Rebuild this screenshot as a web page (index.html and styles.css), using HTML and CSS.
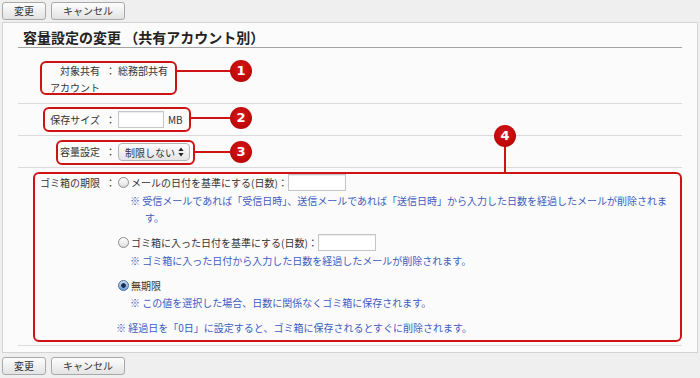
FILE: index.html
```html
<!DOCTYPE html>
<html lang="ja">
<head>
    <meta charset="UTF-8">
    <meta name="viewport" content="width=device-width, initial-scale=1.0">
    <title>容量設定の変更</title>
    <link rel="stylesheet" href="styles.css">
</head>
<body>
    <div class="toolbar">
        <button class="btn">変更</button>
        <button class="btn">キャンセル</button>
    </div>

    <div class="panel">
        <h2 class="panel-title">容量設定の変更 （共有アカウント別）</h2>
        <div class="form">
            <div class="row row-account">
                <div class="label">対象共有<br>アカウント</div>
                <div class="colon">：</div>
                <div class="value">総務部共有</div>
            </div>
            <div class="row row-size">
                <div class="label">保存サイズ</div>
                <div class="colon">：</div>
                <div class="value"><input type="text" class="text-input size-input"><span class="unit">MB</span></div>
            </div>
            <div class="row row-quota">
                <div class="label">容量設定</div>
                <div class="colon">：</div>
                <div class="value">
                    <span class="select-wrap">
                        <select class="select"><option>制限しない</option></select>
                        <svg class="select-arrows" width="6" height="10" viewBox="0 0 6 10"><path d="M3 0.5 L5.6 4 L0.4 4 Z M3 9.5 L5.6 6 L0.4 6 Z" fill="#222"/></svg>
                    </span>
                </div>
            </div>
            <div class="row row-trash">
                <div class="label">ゴミ箱の期限</div>
                <div class="colon">：</div>
                <div class="value">
                    <div class="opt">
                        <label class="radio-line"><input type="radio" name="limit" class="radio">メールの日付を基準にする(日数)：<input type="text" class="text-input days-input"></label>
                        <p class="note">※ 受信メールであれば「受信日時」、送信メールであれば「送信日時」から入力した日数を経過したメールが削除されます。</p>
                    </div>
                    <div class="opt">
                        <label class="radio-line"><input type="radio" name="limit" class="radio">ゴミ箱に入った日付を基準にする(日数)：<input type="text" class="text-input days-input"></label>
                        <p class="note">※ ゴミ箱に入った日付から入力した日数を経過したメールが削除されます。</p>
                    </div>
                    <div class="opt">
                        <label class="radio-line"><input type="radio" name="limit" class="radio" checked>無期限</label>
                        <p class="note">※ この値を選択した場合、日数に関係なくゴミ箱に保存されます。</p>
                    </div>
                    <p class="note note-final">※ 経過日を「0日」に設定すると、ゴミ箱に保存されるとすぐに削除されます。</p>
                </div>
            </div>
        </div>
    </div>

    <div class="toolbar toolbar-bottom">
        <button class="btn">変更</button>
        <button class="btn">キャンセル</button>
    </div>

    <!-- callouts -->
    <div class="mark mark-1"></div>
    <div class="mark mark-2"></div>
    <div class="mark mark-3"></div>
    <div class="mark mark-4"></div>
    <div class="lead lead-1"></div>
    <div class="lead lead-2"></div>
    <div class="lead lead-3"></div>
    <div class="lead lead-4"></div>
    <div class="pin pin-1">1</div>
    <div class="pin pin-2">2</div>
    <div class="pin pin-3">3</div>
    <div class="pin pin-4">4</div>
</body>
</html>
```

FILE: styles.css
```css
body {
    margin: 0;
    position: relative;
    background-color: #efefef;
    font-family: "Noto Sans CJK JP", sans-serif;
    font-size: 10px;
    color: #333;
}
.toolbar {
    display: flex;
    gap: 5px;
    padding: 2px 2px 2px;
}
.toolbar-bottom {
    padding-top: 4px;
}
.btn {
    height: 18px;
    padding: 0 11px;
    border: 1px solid #a9a9a9;
    border-radius: 3px;
    background: linear-gradient(#fdfdfd, #e3e3e3);
    font-family: inherit;
    font-size: 10px;
    line-height: 16px;
    color: #333;
}
.panel {
    margin: 0 2px;
    padding: 0 15px 6px;
    border: 1px solid #d3d3d3;
    background-color: #fbfbfb;
}
.panel-title {
    margin: 0;
    padding: 4px 0 0 5px;
    font-size: 14px;
    line-height: 20px;
    font-weight: bold;
    color: #222;
    border-bottom: 1px solid #a3a3a3;
}
.row {
    display: grid;
    grid-template-columns: 85px 15px 1fr;
    line-height: 17px;
    border-bottom: 1px solid #dadada;
}
.label {
    text-align: right;
    padding-right: 3px;
}
.colon {
    text-align: center;
}
.row-account {
    padding: 14px 0 7px;
}
.row-size {
    padding: 7px 0;
}
.row-quota {
    padding: 7px 0 6px;
}
.row-trash {
    padding: 6px 0 8px;
    line-height: 17.5px;
}
.text-input {
    box-sizing: border-box;
    margin: 0;
    border: 1px solid #c6c6c6;
    background: #fff;
    box-shadow: inset 0 1px 1px rgba(0,0,0,0.08);
    vertical-align: top;
}
.size-input {
    width: 46px;
    height: 17px;
}
.unit {
    margin-left: 4px;
}
.select-wrap {
    position: relative;
    display: inline-block;
    vertical-align: top;
}
.select {
    appearance: none;
    box-sizing: border-box;
    width: 72px;
    height: 18px;
    margin: 0;
    padding: 0 0 0 6px;
    border: 1px solid #b4b4b4;
    border-radius: 4px;
    background: linear-gradient(#fdfdfd, #e4e4e4);
    font-family: inherit;
    font-size: 10px;
    color: #333;
}
.select-arrows {
    position: absolute;
    right: 6px;
    top: 4px;
}
.opt {
    margin-bottom: 7.5px;
}
.radio-line {
    display: flex;
    align-items: center;
}
.radio {
    appearance: none;
    box-sizing: border-box;
    width: 11px;
    height: 11px;
    margin: 0 2px 0 0;
    border: 1px solid #8c8c8c;
    border-radius: 50%;
    background: linear-gradient(#ffffff, #dedede);
}
.radio:checked {
    border-color: #4d6f9e;
    background: radial-gradient(circle, #1b2f52 0 2px, transparent 2.6px), linear-gradient(#c9def5, #6e9bd3);
}
.days-input {
    width: 58px;
    height: 17px;
}
.note {
    margin: 0 0 0 12px;
    padding-left: 15px;
    text-indent: -15px;
    color: #3d5cc0;
}
.note-final {
    margin-left: -2px;
}

/* callouts */
.mark {
    position: absolute;
    box-sizing: border-box;
    border: 2px solid #cf1212;
    border-radius: 6px;
}
.mark-1 { left: 40px; top: 61px; width: 137px; height: 34px; }
.mark-2 { left: 43px; top: 107px; width: 148px; height: 25px; }
.mark-3 { left: 56px; top: 140px; width: 139px; height: 25px; }
.mark-4 { left: 33px; top: 172px; width: 649px; height: 170px; }
.lead {
    position: absolute;
    background-color: #cf1212;
}
.lead-1 { left: 176px; top: 70px; width: 55px; height: 2px; }
.lead-2 { left: 190px; top: 117px; width: 41px; height: 2px; }
.lead-3 { left: 194px; top: 151px; width: 37px; height: 2px; }
.lead-4 { left: 504px; top: 146px; width: 2px; height: 27px; }
.pin {
    position: absolute;
    width: 22px;
    height: 22px;
    border-radius: 50%;
    background: radial-gradient(circle at 50% 40%, #d81818, #b00000);
    color: #fff;
    font-family: "DejaVu Sans", sans-serif;
    font-weight: bold;
    font-size: 13px;
    line-height: 22px;
    text-align: center;
}
.pin-1 { left: 230px; top: 60px; }
.pin-2 { left: 230px; top: 107px; }
.pin-3 { left: 230px; top: 141px; }
.pin-4 { left: 494px; top: 125px; }
```
